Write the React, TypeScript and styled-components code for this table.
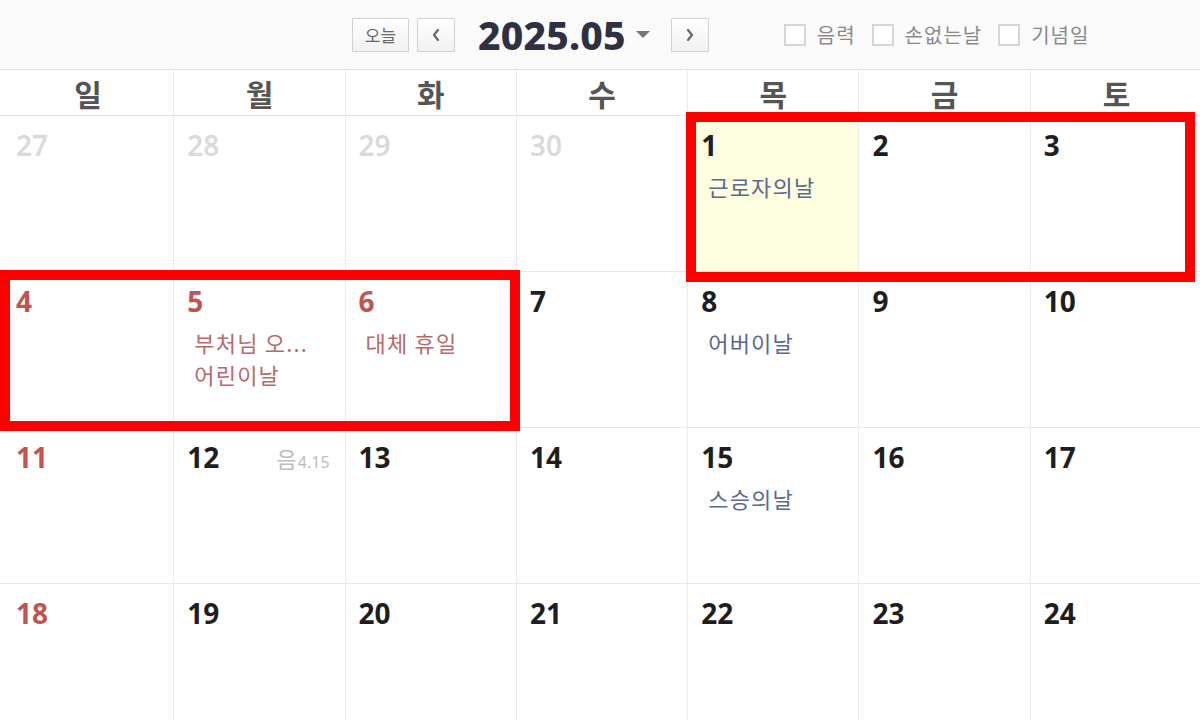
import React from 'react';
import styled, { createGlobalStyle } from 'styled-components';

const GlobalStyle = createGlobalStyle`
  html, body { margin: 0; padding: 0; background: #fff; }
  body { font-family: "Noto Sans", "Noto Sans CJK KR", sans-serif; }
  #root { width: 1200px; height: 720px; overflow: hidden; }
`;

const Page = styled.div`
  position: relative;
  width: 1200px;
  height: 720px;
  overflow: hidden;
  background: #fff;
`;

const Header = styled.header`
  height: 70px;
  box-sizing: border-box;
  border-bottom: 1px solid #e1e1e1;
  background: #fafafa;
  display: flex;
  align-items: center;
  padding-left: 352px;
`;

const Nav = styled.div`
  display: flex;
  align-items: center;
`;

const Btn = styled.button<{ $w: number; $ml?: number }>`
  width: ${p => p.$w}px;
  height: 34px;
  margin-left: ${p => p.$ml ?? 0}px;
  box-sizing: border-box;
  border: 1px solid #d0d0d0;
  border-radius: 1px;
  background: linear-gradient(#ffffff, #f1f1f1);
  color: #666;
  font-family: "Noto Sans CJK KR", sans-serif;
  font-size: 17px;
  padding: 0;
  display: flex;
  align-items: center;
  justify-content: center;
`;

const Title = styled.div`
  margin-left: 23px;
  font-family: "Noto Sans", sans-serif;
  font-weight: 800;
  font-size: 39px;
  line-height: 42px;
  color: #2f3142;
  letter-spacing: 0.2px;
`;

const Caret = styled.span`
  margin-left: 10px;
  margin-right: 21px;
  width: 0;
  height: 0;
  border-left: 7px solid transparent;
  border-right: 7px solid transparent;
  border-top: 7px solid #777;
`;

const Options = styled.div`
  display: flex;
  align-items: center;
  margin-left: 75px;
  gap: 16px;
`;

const Option = styled.label`
  display: flex;
  align-items: center;
  gap: 11px;
  font-family: "Noto Sans CJK KR", sans-serif;
  font-size: 20px;
  letter-spacing: 1px;
  color: #8a8a8a;
`;

const Box = styled.span`
  width: 22px;
  height: 22px;
  box-sizing: border-box;
  border: 2px solid #d6d6d6;
  background: #fff;
`;

const Grid = styled.div`
  display: grid;
  grid-template-columns: repeat(7, 171.3px);
  padding-left: 3px;
`;

const DayNames = styled(Grid)`
  height: 46px;
  box-sizing: border-box;
  border-bottom: 1px solid #e3e3e3;
`;

const DayName = styled.div`
  display: flex;
  align-items: center;
  justify-content: center;
  border-right: 1px solid #ececec;
  font-family: "Noto Sans CJK KR", sans-serif;
  font-weight: 700;
  font-size: 30px;
  color: #555;
  &:last-child { border-right: none; }
`;

const Week = styled(Grid)`
  height: 156px;
  box-sizing: border-box;
  border-bottom: 1px solid #e8e8e8;
`;

const Cell = styled.div<{ $today?: boolean }>`
  box-sizing: border-box;
  border-right: 1px solid #ececec;
  background: ${p => (p.$today ? '#fdfde0' : 'transparent')};
  padding: 14px 15px 0 13px;
  &:last-child { border-right: none; }
`;

const DateRow = styled.div`
  display: flex;
  justify-content: space-between;
  align-items: baseline;
`;

const Num = styled.span<{ $tone: 'normal' | 'red' | 'faded' }>`
  font-family: "Noto Sans", sans-serif;
  font-weight: ${p => (p.$tone === 'faded' ? 600 : 700)};
  font-size: 28px;
  line-height: 30px;
  color: ${p => (p.$tone === 'red' ? '#bf5552' : p.$tone === 'faded' ? '#dadada' : '#1e1e1e')};
`;

const Lunar = styled.span`
  font-family: "Noto Sans CJK KR", sans-serif;
  font-size: 22px;
  color: #bdbdbd;
  small { font-family: "Noto Sans", sans-serif; font-size: 16px; margin-left: 1px; }
`;

const Events = styled.div`
  margin-top: 10px;
  padding-left: 7px;
`;

const Event = styled.div<{ $red?: boolean }>`
  font-family: "Noto Sans CJK KR", sans-serif;
  font-size: 22px;
  line-height: 32px;
  letter-spacing: 1.2px;
  white-space: nowrap;
  color: ${p => (p.$red ? '#b86a6a' : '#5a6991')};
`;

const Highlight = styled.div<{ $l: number; $t: number; $w: number; $h: number }>`
  position: absolute;
  left: ${p => p.$l}px;
  top: ${p => p.$t}px;
  width: ${p => p.$w}px;
  height: ${p => p.$h}px;
  box-sizing: border-box;
  border: 10px solid #fe0000;
  pointer-events: none;
`;

type Day = {
  n: number;
  tone?: 'normal' | 'red' | 'faded';
  events?: { t: string; red?: boolean }[];
  today?: boolean;
  lunar?: string;
};

const weeks: Day[][] = [
  [
    { n: 27, tone: 'faded' },
    { n: 28, tone: 'faded' },
    { n: 29, tone: 'faded' },
    { n: 30, tone: 'faded' },
    { n: 1, today: true, events: [{ t: '근로자의날' }] },
    { n: 2 },
    { n: 3 },
  ],
  [
    { n: 4, tone: 'red' },
    { n: 5, tone: 'red', events: [{ t: '부처님 오...', red: true }, { t: '어린이날', red: true }] },
    { n: 6, tone: 'red', events: [{ t: '대체 휴일', red: true }] },
    { n: 7 },
    { n: 8, events: [{ t: '어버이날' }] },
    { n: 9 },
    { n: 10 },
  ],
  [
    { n: 11, tone: 'red' },
    { n: 12, lunar: '4.15' },
    { n: 13 },
    { n: 14 },
    { n: 15, events: [{ t: '스승의날' }] },
    { n: 16 },
    { n: 17 },
  ],
  [
    { n: 18, tone: 'red' },
    { n: 19 },
    { n: 20 },
    { n: 21 },
    { n: 22 },
    { n: 23 },
    { n: 24 },
  ],
];

const Chevron = ({ dir }: { dir: 'l' | 'r' }) => (
  <svg width="10" height="14" viewBox="0 0 10 14">
    <polyline
      points={dir === 'l' ? '7,2 3,7 7,12' : '3,2 7,7 3,12'}
      fill="none"
      stroke="#666"
      strokeWidth="2.2"
      strokeLinecap="round"
      strokeLinejoin="round"
    />
  </svg>
);

export default function App() {
  return (
    <Page>
      <GlobalStyle />
      <Header>
        <Nav>
          <Btn $w={57}>오늘</Btn>
          <Btn $w={38} $ml={8}>
            <Chevron dir="l" />
          </Btn>
          <Title>2025.05</Title>
          <Caret />
          <Btn $w={38}>
            <Chevron dir="r" />
          </Btn>
        </Nav>
        <Options>
          <Option><Box />음력</Option>
          <Option><Box />손없는날</Option>
          <Option><Box />기념일</Option>
        </Options>
      </Header>
      <DayNames>
        {['일', '월', '화', '수', '목', '금', '토'].map(d => (
          <DayName key={d}>{d}</DayName>
        ))}
      </DayNames>
      {weeks.map((w, i) => (
        <Week key={i}>
          {w.map(d => (
            <Cell key={d.n} $today={d.today}>
              <DateRow>
                <Num $tone={d.tone ?? 'normal'}>{d.n}</Num>
                {d.lunar && (
                  <Lunar>
                    음<small>{d.lunar}</small>
                  </Lunar>
                )}
              </DateRow>
              {d.events && (
                <Events>
                  {d.events.map(e => (
                    <Event key={e.t} $red={e.red}>{e.t}</Event>
                  ))}
                </Events>
              )}
            </Cell>
          ))}
        </Week>
      ))}
      <Highlight $l={686} $t={112} $w={509} $h={170} />
      <Highlight $l={0} $t={270} $w={520} $h={161} />
    </Page>
  );
}
